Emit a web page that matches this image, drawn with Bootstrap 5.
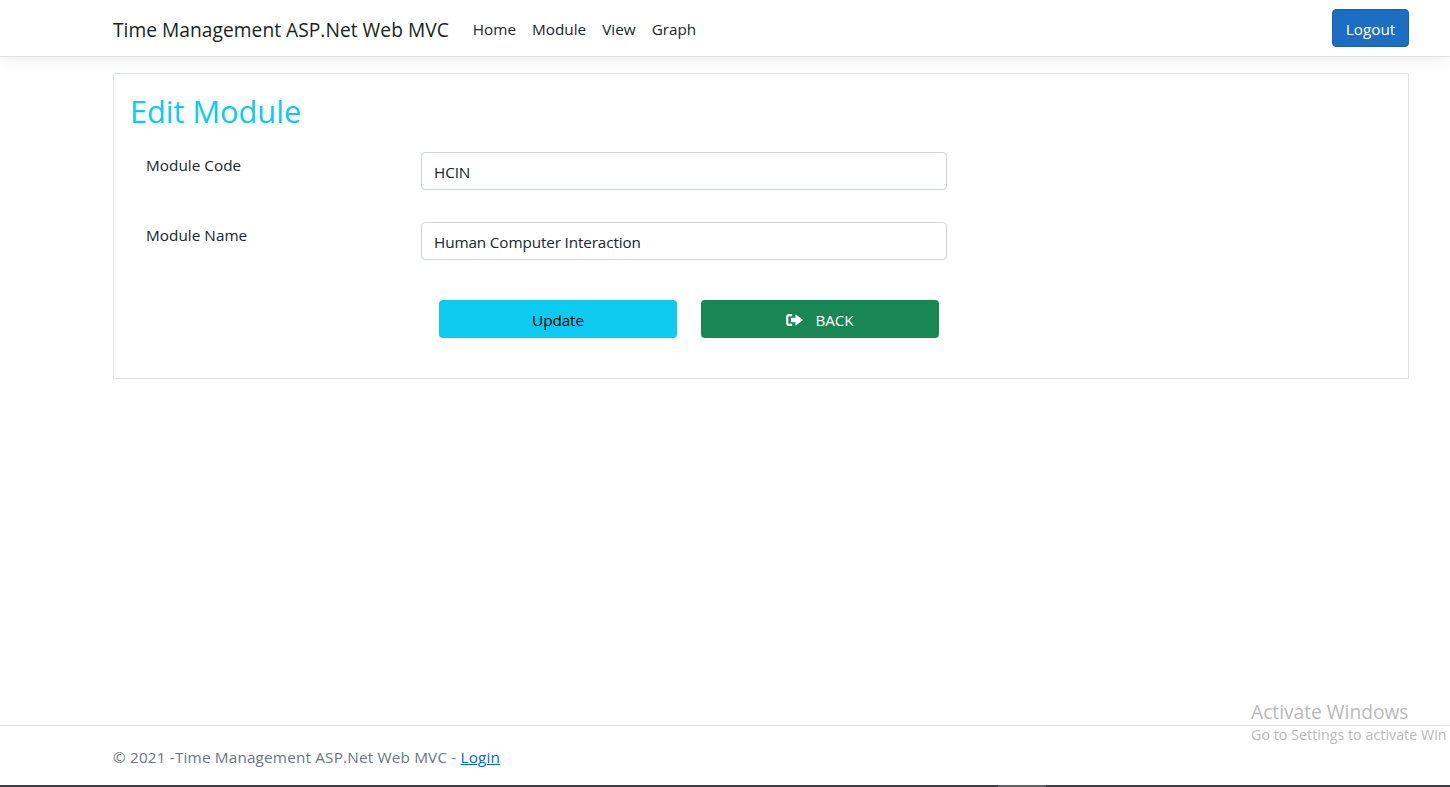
<!DOCTYPE html>
<html lang="en">
<head>
<meta charset="utf-8">
<title>Edit Module</title>
<link href="https://cdn.jsdelivr.net/npm/bootstrap@5.3.0/dist/css/bootstrap.min.css" rel="stylesheet">
<style>
html, body { height: 100%; overflow: hidden; }
body { font-family: "Segoe UI", "Open Sans", "Noto Sans", sans-serif; font-size: 16px; color: #212529; }
.page-box { width: 1320px; margin-left: 101px; padding: 0 12px; flex: none; }
.tx { font-size: 15.3px; letter-spacing: -.1px; }
.topbar { height: 57px; border-bottom: 1px solid #dee2e6; box-shadow: 0 4px 12px rgba(0,0,0,.055); }
.topbar .navbar-brand { font-size: 19.2px; letter-spacing: .03px; margin-right: 16px; padding: 4px 0 0; color: #1b1e21; }
.topbar .nav-link { padding: 9px 8px 7px; color: #212529; line-height: 24px; letter-spacing: 0; }
.btn { border-radius: 4px; height: 38px; padding: 7px 12px 5px; line-height: 24px; }
.btn-logout { background: #1b6ec2; border-color: #1861ac; color: #fff; width: 77px; letter-spacing: 0; }
.btn-update { background: #0dcaf0; color: #000; }
.btn-back { background: #198754; color: #fff; padding-top: 8px; }
.panel { margin-top: 16px; height: 306px; border: 1px solid #dee2e6; }
.panel h2 { font-size: 30.8px; letter-spacing: -.05px; line-height: 38.4px; color: #0dcaf0; font-weight: 400; padding-top: 2px; margin-bottom: 6px; }
.fields { width: 1076px; }
.field-row { height: 38px; margin-bottom: 32px; }
.field-row label { line-height: 24px; padding-top: 1px; letter-spacing: .03px; }
.form-control { border-radius: 4px; border-color: #ced4da; height: 38px; padding: 7px 12px 5px; color: #212529; }
.form-control.tx { letter-spacing: -.14px; }
.actions { margin: 8px 0 0 6px; width: 524px; }
.back-icon { margin: 5px 8px 0 0; }
.foot { height: 60px; line-height: 60px; border-top: 1px solid #dee2e6; color: #6c757d; padding-top: 1px; }
.foot .tx { letter-spacing: .17px; }
.foot a { color: #0366d6; }
.taskline { height: 2px; background: #3f3e40; }
.taskline div { width: 48px; height: 2px; margin-left: 998px; background: #626262; }
.watermark { position: absolute; left: 1251px; top: 698px; color: #b9b9b9; white-space: nowrap; }
.watermark .wm-title { font-size: 19.2px; line-height: 28px; }
.watermark .wm-note { font-size: 14.2px; line-height: 18px; letter-spacing: .06px; }
</style>
</head>
<body class="d-flex flex-column">
<header>
  <nav class="topbar navbar navbar-expand p-0 align-items-center">
    <div class="page-box d-flex align-items-center">
      <a class="navbar-brand" href="#">Time Management ASP.Net Web MVC</a>
      <ul class="navbar-nav flex-grow-1 pt-1 pb-1">
        <li class="nav-item"><a class="nav-link tx" href="#">Home</a></li>
        <li class="nav-item"><a class="nav-link tx" href="#">Module</a></li>
        <li class="nav-item"><a class="nav-link tx" href="#">View</a></li>
        <li class="nav-item"><a class="nav-link tx" href="#">Graph</a></li>
      </ul>
      <a class="btn btn-logout tx" href="#">Logout</a>
    </div>
  </nav>
</header>
<main class="page-box flex-grow-1">
  <div class="panel p-3">
    <h2>Edit Module</h2>
    <form class="px-3 pt-3">
      <div class="fields">
        <div class="row field-row">
          <div class="col-3"><label class="tx" for="code">Module Code</label></div>
          <div class="col-6"><input id="code" class="form-control tx" value="HCIN"></div>
        </div>
        <div class="row field-row">
          <div class="col-3"><label class="tx" for="name">Module Name</label></div>
          <div class="col-6"><input id="name" class="form-control tx" value="Human Computer Interaction"></div>
        </div>
        <div class="row">
          <div class="col-6 offset-3">
            <div class="actions row">
              <div class="col-6"><button type="button" class="btn btn-update w-100 border-0 tx">Update</button></div>
              <div class="col-6"><a href="#" class="btn btn-back w-100 border-0 tx d-flex justify-content-center"><svg class="back-icon" width="17" height="14" viewBox="0 0 17 14"><path d="M6.2 2.1H3.2Q1.2 2.1 1.2 4.1v5.8q0 2 2 2h3" fill="none" stroke="#fff" stroke-width="2.2"/><path d="M5 4.7h4.4V2q0-1 .8-.3l6.2 4.9q.5.4 0 .8l-6.2 4.9q-.8.7-.8-.3V9.3H5z" fill="#fff"/></svg><span class="ms-1">BACK</span></a></div>
            </div>
          </div>
        </div>
      </div>
    </form>
  </div>
</main>
<footer class="foot"><div class="page-box tx">© 2021 -Time Management ASP.Net Web MVC - <a href="#">Login</a></div></footer>
<div class="taskline"><div></div></div>
<aside class="watermark"><div class="wm-title">Activate Windows</div><div class="wm-note">Go to Settings to activate Win</div></aside>
<script src="https://cdn.jsdelivr.net/npm/bootstrap@5.3.0/dist/js/bootstrap.bundle.min.js"></script>
</body>
</html>
